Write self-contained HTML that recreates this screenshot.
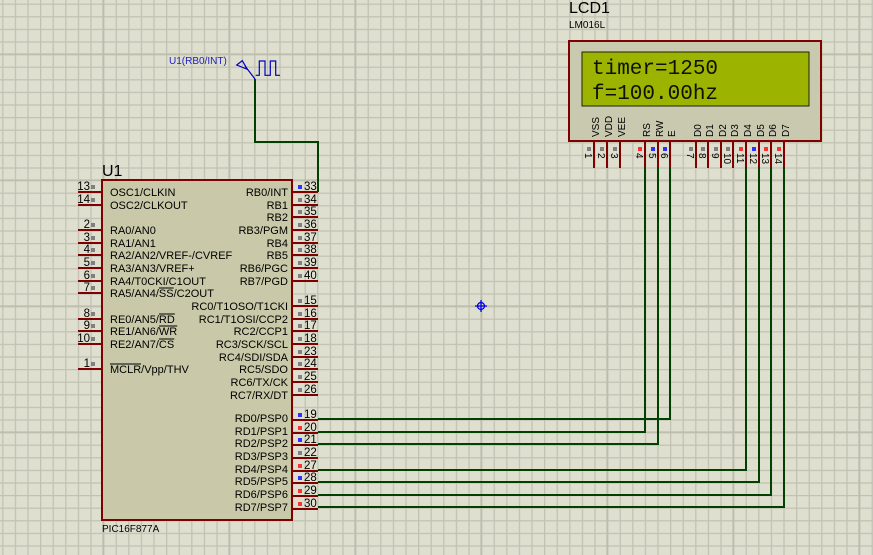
<!DOCTYPE html>
<html><head><meta charset="utf-8"><style>
html,body{margin:0;padding:0;background:#dfdfd0;}
svg{display:block}
text{font-family:"Liberation Sans",Arial,sans-serif;}
text.mono{font-family:"Liberation Mono","DejaVu Sans Mono",monospace;}
</style></head><body>
<svg width="873" height="555" viewBox="0 0 873 555" xmlns="http://www.w3.org/2000/svg">
<defs>
<pattern id="g" x="2.2" y="3.6" width="12.6" height="12.6" patternUnits="userSpaceOnUse">
<path d="M0.6 0V12.6M0 0.6H12.6" stroke="#c1c1b2" stroke-width="1.3" fill="none"/>
</pattern>
<pattern id="G" x="102.4" y="53.4" width="126" height="126" patternUnits="userSpaceOnUse">
<path d="M0.8 0V126M0 0.8H126" stroke="#bdbdad" stroke-width="2" fill="none"/>
</pattern>
</defs>
<rect width="873" height="555" fill="#dfdfd0"/>
<rect width="873" height="555" fill="url(#g)"/>
<rect width="873" height="555" fill="url(#G)"/>

<g stroke="#004000" stroke-width="2" fill="none">
<path d="M255 79V142H318V192"/>
<path d="M318 419H670V168"/>
<path d="M318 432H645V168"/>
<path d="M318 444H658V168"/>
<path d="M318 470H746V168"/>
<path d="M318 482H759V168"/>
<path d="M318 495H771V168"/>
<path d="M318 507H784V168"/>
</g>

<g stroke="#0000c0" stroke-width="1.2" fill="none">
<path d="M236.7 65L242.3 60.7L247.3 69.3Z"/>
<path d="M245 66L255 79"/>
<path d="M255.7 75.3H259.3V61H265V75.3H270.3V61H275.7V75.3H280"/>
</g>
<text x="169" y="64" font-size="10" fill="#2020c0">U1(RB0/INT)</text>

<g stroke="#0000e0" stroke-width="1.3" fill="none">
<circle cx="481" cy="306" r="3.5"/><path d="M475 306H487M481 300V312"/>
</g>

<g stroke="#800000" stroke-width="2">
<path d="M78 192H102M78 205H102M78 230H102M78 243H102M78 255H102M78 268H102M78 281H102M78 293H102M78 319H102M78 331H102M78 344H102M78 369H102"/>
<path d="M292 192H318M292 205H318M292 217H318M292 230H318M292 243H318M292 255H318M292 268H318M292 281H318M292 306H318M292 319H318M292 331H318M292 344H318M292 357H318M292 369H318M292 382H318M292 395H318M292 420H318M292 433H318M292 445H318M292 458H318M292 471H318M292 483H318M292 496H318M292 509H318"/>
</g>
<rect x="102" y="180" width="190" height="340" fill="#c9c9a9" stroke="#800000" stroke-width="2"/>
<text x="102" y="176" font-size="16" fill="#000">U1</text>
<text x="102" y="532" font-size="10" fill="#000">PIC16F877A</text>

<g font-size="11" fill="#000">
<g text-anchor="end" font-size="11.5">
<text x="90" y="190">13</text><text x="90" y="203">14</text><text x="90" y="228">2</text><text x="90" y="241">3</text><text x="90" y="253">4</text><text x="90" y="266">5</text><text x="90" y="279">6</text><text x="90" y="291">7</text><text x="90" y="317">8</text><text x="90" y="329">9</text><text x="90" y="342">10</text><text x="90" y="367">1</text>
</g>
<g fill="#808080">
<rect x="91" y="185" width="4" height="4"/><rect x="91" y="198" width="4" height="4"/><rect x="91" y="223" width="4" height="4"/><rect x="91" y="236" width="4" height="4"/><rect x="91" y="248" width="4" height="4"/><rect x="91" y="261" width="4" height="4"/><rect x="91" y="274" width="4" height="4"/><rect x="91" y="286" width="4" height="4"/><rect x="91" y="312" width="4" height="4"/><rect x="91" y="324" width="4" height="4"/><rect x="91" y="337" width="4" height="4"/><rect x="91" y="362" width="4" height="4"/>
</g>
<text x="110" y="196">OSC1/CLKIN</text>
<text x="110" y="209">OSC2/CLKOUT</text>
<text x="110" y="234">RA0/AN0</text>
<text x="110" y="247">RA1/AN1</text>
<text x="110" y="259">RA2/AN2/VREF-/CVREF</text>
<text x="110" y="272">RA3/AN3/VREF+</text>
<text x="110" y="285">RA4/T0CKI/C1OUT</text>
<text x="110" y="297">RA5/AN4/SS/C2OUT</text>
<text x="110" y="323">RE0/AN5/RD</text>
<text x="110" y="335">RE1/AN6/WR</text>
<text x="110" y="348">RE2/AN7/CS</text>
<text x="110" y="373">MCLR/Vpp/THV</text>
<path d="M159 288H173.6M159 314H174.8M159 326H177.2M159 339H174.3M110 364H141" stroke="#000" stroke-width="0.9" fill="none"/>
<g text-anchor="end">
<text x="288" y="196">RB0/INT</text><text x="288" y="209">RB1</text><text x="288" y="221">RB2</text><text x="288" y="234">RB3/PGM</text><text x="288" y="247">RB4</text><text x="288" y="259">RB5</text><text x="288" y="272">RB6/PGC</text><text x="288" y="285">RB7/PGD</text>
<text x="288" y="310">RC0/T1OSO/T1CKI</text><text x="288" y="323">RC1/T1OSI/CCP2</text><text x="288" y="335">RC2/CCP1</text><text x="288" y="348">RC3/SCK/SCL</text><text x="288" y="361">RC4/SDI/SDA</text><text x="288" y="373">RC5/SDO</text><text x="288" y="386">RC6/TX/CK</text><text x="288" y="399">RC7/RX/DT</text>
<text x="288" y="422">RD0/PSP0</text><text x="288" y="435">RD1/PSP1</text><text x="288" y="447">RD2/PSP2</text><text x="288" y="460">RD3/PSP3</text><text x="288" y="473">RD4/PSP4</text><text x="288" y="485">RD5/PSP5</text><text x="288" y="498">RD6/PSP6</text><text x="288" y="511">RD7/PSP7</text>
</g>
<g font-size="11.5">
<text x="304" y="190">33</text><text x="304" y="203">34</text><text x="304" y="215">35</text><text x="304" y="228">36</text><text x="304" y="241">37</text><text x="304" y="253">38</text><text x="304" y="266">39</text><text x="304" y="279">40</text>
<text x="304" y="304">15</text><text x="304" y="317">16</text><text x="304" y="329">17</text><text x="304" y="342">18</text><text x="304" y="355">23</text><text x="304" y="367">24</text><text x="304" y="380">25</text><text x="304" y="393">26</text>
<text x="304" y="418">19</text><text x="304" y="431">20</text><text x="304" y="443">21</text><text x="304" y="456">22</text><text x="304" y="469">27</text><text x="304" y="481">28</text><text x="304" y="494">29</text><text x="304" y="507">30</text>
</g>
<g fill="#808080">
<rect x="298" y="198" width="4" height="4"/><rect x="298" y="210" width="4" height="4"/><rect x="298" y="223" width="4" height="4"/><rect x="298" y="236" width="4" height="4"/><rect x="298" y="248" width="4" height="4"/><rect x="298" y="261" width="4" height="4"/><rect x="298" y="274" width="4" height="4"/>
<rect x="298" y="299" width="4" height="4"/><rect x="298" y="312" width="4" height="4"/><rect x="298" y="324" width="4" height="4"/><rect x="298" y="337" width="4" height="4"/><rect x="298" y="350" width="4" height="4"/><rect x="298" y="362" width="4" height="4"/><rect x="298" y="375" width="4" height="4"/><rect x="298" y="388" width="4" height="4"/>
<rect x="298" y="451" width="4" height="4"/>
</g>
<g fill="#3030ff"><rect x="298" y="185" width="4" height="4"/><rect x="298" y="413" width="4" height="4"/><rect x="298" y="438" width="4" height="4"/><rect x="298" y="476" width="4" height="4"/></g>
<g fill="#ff3030"><rect x="298" y="426" width="4" height="4"/><rect x="298" y="464" width="4" height="4"/><rect x="298" y="489" width="4" height="4"/><rect x="298" y="502" width="4" height="4"/></g>
</g>

<text x="569" y="13" font-size="16" fill="#000">LCD1</text>
<text x="569" y="28" font-size="10" fill="#000">LM016L</text>
<g stroke="#800000" stroke-width="2">
<path d="M594 142V168M607 142V168M620 142V168M645 142V168M658 142V168M670 142V168M696 142V168M708 142V168M721 142V168M733 142V168M746 142V168M759 142V168M771 142V168M784 142V168"/>
</g>
<rect x="569" y="41" width="252" height="100" fill="#c9c9b0" stroke="#800000" stroke-width="2"/>
<rect x="582" y="52" width="227" height="54" fill="#9cb400" stroke="#202000" stroke-width="1"/>
<text class="mono" x="592" y="74" style="font-family:'Liberation Mono','DejaVu Sans Mono',monospace" font-size="21" fill="#101000">timer=1250</text>
<text class="mono" x="592" y="99" style="font-family:'Liberation Mono','DejaVu Sans Mono',monospace" font-size="21" fill="#101000">f=100.00hz</text>
<g font-size="10" fill="#000">
<text transform="translate(599,137) rotate(-90)">VSS</text>
<text transform="translate(612,137) rotate(-90)">VDD</text>
<text transform="translate(625,137) rotate(-90)">VEE</text>
<text transform="translate(650,137) rotate(-90)">RS</text>
<text transform="translate(663,137) rotate(-90)">RW</text>
<text transform="translate(675,137) rotate(-90)">E</text>
<text transform="translate(701,137) rotate(-90)">D0</text>
<text transform="translate(713,137) rotate(-90)">D1</text>
<text transform="translate(726,137) rotate(-90)">D2</text>
<text transform="translate(738,137) rotate(-90)">D3</text>
<text transform="translate(751,137) rotate(-90)">D4</text>
<text transform="translate(764,137) rotate(-90)">D5</text>
<text transform="translate(776,137) rotate(-90)">D6</text>
<text transform="translate(789,137) rotate(-90)">D7</text>
<text transform="translate(585,153) rotate(90)">1</text>
<text transform="translate(598,153) rotate(90)">2</text>
<text transform="translate(611,153) rotate(90)">3</text>
<text transform="translate(636,153) rotate(90)">4</text>
<text transform="translate(649,153) rotate(90)">5</text>
<text transform="translate(661,153) rotate(90)">6</text>
<text transform="translate(687,153) rotate(90)">7</text>
<text transform="translate(699,153) rotate(90)">8</text>
<text transform="translate(712,153) rotate(90)">9</text>
<text transform="translate(724,153) rotate(90)">10</text>
<text transform="translate(737,153) rotate(90)">11</text>
<text transform="translate(750,153) rotate(90)">12</text>
<text transform="translate(762,153) rotate(90)">13</text>
<text transform="translate(775,153) rotate(90)">14</text>
</g>
<g fill="#808080"><rect x="587" y="147" width="4" height="4"/><rect x="600" y="147" width="4" height="4"/><rect x="613" y="147" width="4" height="4"/><rect x="689" y="147" width="4" height="4"/><rect x="701" y="147" width="4" height="4"/><rect x="714" y="147" width="4" height="4"/><rect x="726" y="147" width="4" height="4"/></g>
<g fill="#ff3030"><rect x="638" y="147" width="4" height="4"/><rect x="739" y="147" width="4" height="4"/><rect x="764" y="147" width="4" height="4"/><rect x="777" y="147" width="4" height="4"/></g>
<g fill="#3030ff"><rect x="651" y="147" width="4" height="4"/><rect x="663" y="147" width="4" height="4"/><rect x="752" y="147" width="4" height="4"/></g>
</svg>
</body></html>
